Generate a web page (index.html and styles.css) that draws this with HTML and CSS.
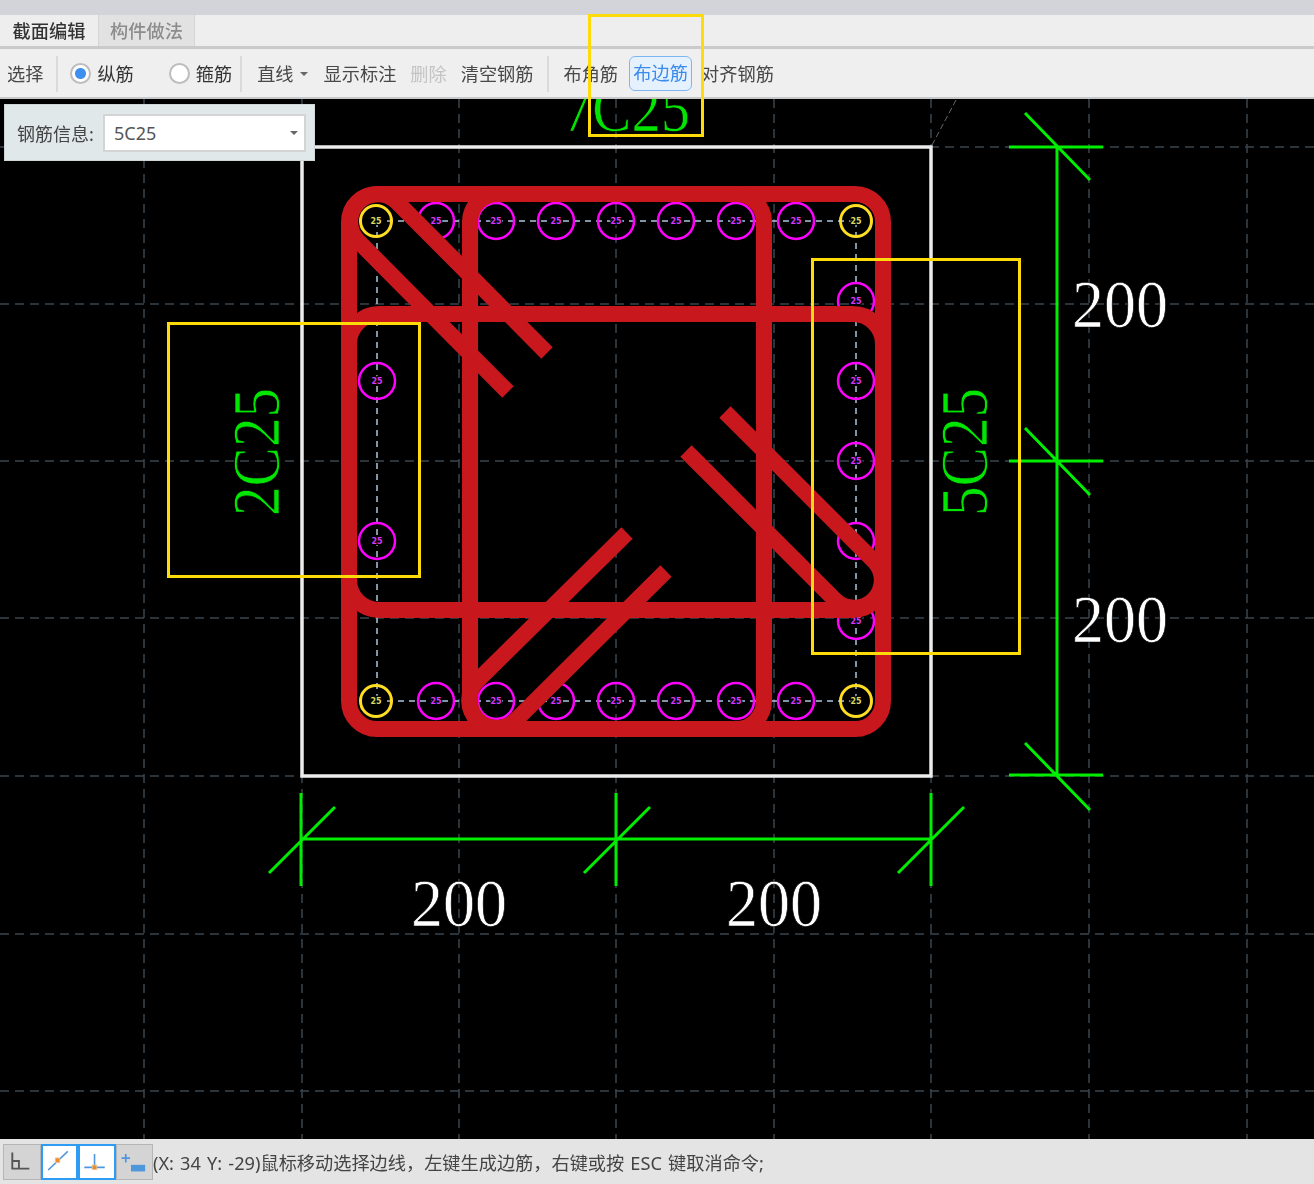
FILE: index.html
```html
<!DOCTYPE html>
<html lang="zh">
<head>
<meta charset="utf-8">
<title>截面编辑</title>
<link rel="stylesheet" href="styles.css">
</head>
<body>
<div class="app">
  <div class="titlebar"></div>
  <div class="tabs">
    <div class="tab tab-active">截面编辑</div>
    <div class="tab tab-idle">构件做法</div>
  </div>
  <div class="toolbar">
    <span class="tool t-select">选择</span>
    <i class="sep s1"></i>
    <span class="radio radio-on r1"></span><span class="tool t-zong">纵筋</span>
    <span class="radio r2"></span><span class="tool t-gu">箍筋</span>
    <i class="sep s2"></i>
    <span class="tool t-line">直线</span><span class="caret"></span>
    <span class="tool t-show">显示标注</span>
    <span class="tool tool-off t-del">删除</span>
    <span class="tool t-clear">清空钢筋</span>
    <i class="sep s3"></i>
    <span class="tool t-corner">布角筋</span>
    <span class="tool tool-on">布边筋</span>
    <span class="tool t-align">对齐钢筋</span>
  </div>
  <div class="canvas">
    <svg class="drawing" viewBox="0 99 1314 1040" xmlns="http://www.w3.org/2000/svg">
      <g class="grid">
        <path d="M144 99V1139M302 99V1139M459 99V1139M616 99V1139M774 99V1139M931 99V1139M1089 99V1139M1247 99V1139"/>
        <path d="M0 147H1314M0 304H1314M0 461H1314M0 618H1314M0 776H1314M0 934H1314M0 1091H1314"/>
      </g>
      <path class="leader" d="M932 145L956 100"/>
      <rect class="concrete" x="302" y="147" width="629" height="629"/>
      <path class="guide" d="M376 221H856M376 701H856M377 221V701M856 221V701"/>
      <g class="bar-main">
        <circle cx="436" cy="221" r="18"/><circle cx="496" cy="221" r="18"/><circle cx="556" cy="221" r="18"/><circle cx="616" cy="221" r="18"/><circle cx="676" cy="221" r="18"/><circle cx="736" cy="221" r="18"/><circle cx="796" cy="221" r="18"/>
        <circle cx="436" cy="701" r="18"/><circle cx="496" cy="701" r="18"/><circle cx="556" cy="701" r="18"/><circle cx="616" cy="701" r="18"/><circle cx="676" cy="701" r="18"/><circle cx="736" cy="701" r="18"/><circle cx="796" cy="701" r="18"/>
        <circle cx="377" cy="381" r="18"/><circle cx="377" cy="541" r="18"/>
        <circle cx="856" cy="301" r="18"/><circle cx="856" cy="381" r="18"/><circle cx="856" cy="461" r="18"/><circle cx="856" cy="541" r="18"/><circle cx="856" cy="621" r="18"/>
      </g>
      <g class="bar-corner">
        <circle cx="376" cy="221" r="15.500"/><circle cx="856" cy="221" r="15.500"/><circle cx="376" cy="701" r="15.500"/><circle cx="856" cy="701" r="15.500"/>
      </g>
      <g class="bar-label">
        <text x="436" y="224">25</text><text x="496" y="224">25</text><text x="556" y="224">25</text><text x="616" y="224">25</text><text x="676" y="224">25</text><text x="736" y="224">25</text><text x="796" y="224">25</text>
        <text x="436" y="704">25</text><text x="496" y="704">25</text><text x="556" y="704">25</text><text x="616" y="704">25</text><text x="676" y="704">25</text><text x="736" y="704">25</text><text x="796" y="704">25</text>
        <text x="377" y="384">25</text><text x="377" y="544">25</text>
        <text x="856" y="304">25</text><text x="856" y="384">25</text><text x="856" y="464">25</text><text x="856" y="544">25</text><text x="856" y="624">25</text>
      </g>
      <g class="bar-label-corner">
        <text x="376" y="224">25</text><text x="856" y="224">25</text><text x="376" y="704">25</text><text x="856" y="704">25</text>
      </g>
      <g class="stirrup">
        <rect x="349" y="194" width="534" height="535" rx="28"/>
        <rect x="349" y="314" width="534" height="296" rx="30"/>
        <rect x="470" y="194" width="294" height="535" rx="28"/>
        <path d="M547 353L396.500 201.500A27.600 27.600 0 0 0 357.500 240.500L508 392"/>
        <path d="M627 533L476.500 681.500A27.600 27.600 0 0 0 515.500 720.500L666 571"/>
        <path d="M725 412L874.500 561.500A27.600 27.600 0 0 1 835.500 600.500L686 451"/>
      </g>
      <path class="dim" d="M1057 147V775M1009 147H1103M1009 461H1103M1009 775H1103M1025 113L1090 180M1025 428L1090 495M1025 743L1090 810"/>
      <path class="dim" d="M301 839H931M301 793V886M616 793V886M931 793V886M269 873L335 807M584 873L650 807M898 873L964 807"/>
      <text class="dim-text" x="1072" y="327" textLength="96" lengthAdjust="spacingAndGlyphs">200</text>
      <text class="dim-text" x="1072" y="642" textLength="96" lengthAdjust="spacingAndGlyphs">200</text>
      <text class="dim-text" x="411" y="926" textLength="96" lengthAdjust="spacingAndGlyphs">200</text>
      <text class="dim-text" x="726" y="926" textLength="96" lengthAdjust="spacingAndGlyphs">200</text>
      <text class="bar-text" x="563" y="131" textLength="127" lengthAdjust="spacingAndGlyphs">7C25</text>
      <text class="bar-text" transform="translate(279 516) rotate(-90)" textLength="128" lengthAdjust="spacingAndGlyphs">2C25</text>
      <text class="bar-text" transform="translate(987 516) rotate(-90)" textLength="128" lengthAdjust="spacingAndGlyphs">5C25</text>
    </svg>
    <div class="panel">
      <label class="panel-label">钢筋信息:</label>
      <div class="combo"><span>5C25</span><span class="caret caret-combo"></span></div>
    </div>
  </div>
  <div class="statusbar">
    <div class="snaps">
      <div class="snap">
        <svg viewBox="0 0 36 36"><path class="ico-dark" d="M8 8V25H26M8 17H15V25"/></svg>
      </div>
      <div class="snap snap-on">
        <svg viewBox="0 0 36 36"><path class="ico-blue" d="M5 27L27 6"/><rect class="ico-orange" x="13" y="13.500" width="5" height="5"/></svg>
      </div>
      <div class="snap snap-on">
        <svg viewBox="0 0 36 36"><path class="ico-blue" d="M4 24H27M15.500 9V24"/><rect class="ico-orange" x="13" y="21.500" width="5" height="5"/></svg>
      </div>
      <div class="snap">
        <svg viewBox="0 0 36 36"><path class="ico-blue" d="M4 14H13M8.500 9.500V18.500"/><rect class="ico-fill" x="14" y="21" width="15" height="7"/></svg>
      </div>
    </div>
    <span class="status-text">(X: 34 Y: -29)鼠标移动选择边线，左键生成边筋，右键或按 ESC 键取消命令;</span>
  </div>
</div>
<div class="mark mark-a"></div>
<div class="mark mark-b"></div>
<div class="mark mark-c"></div>
</body>
</html>
```
FILE: styles.css
```css
* { box-sizing: border-box; }
html, body { margin: 0; padding: 0; }
body {
  width: 1314px;
  height: 1184px;
  overflow: hidden;
  font-family: "Noto Sans", "Noto Sans CJK SC", sans-serif;
  color: #444;
  position: relative;
}
.app { display: flex; flex-direction: column; height: 100%; }
.titlebar { height: 15px; background: #d3d4d9; flex: none; }
.tabs {
  height: 34px;
  flex: none;
  display: flex;
  background: #eeeeee;
  border-bottom: 3px solid #c9cacc;
}
.tab {
  width: 98px;
  font-size: 18.200px;
  line-height: 33px;
  text-align: center;
  font-weight: 500;
  filter: blur(0.3px);
}
.tab-active { color: #333; background: #eeeeee; }
.tab-idle { color: #8c8c8c; background: #e2e2e2; border-left: 1px solid #d5d5d5; border-right: 1px solid #d5d5d5; width: 97px; }
.toolbar {
  height: 50px;
  flex: none;
  display: flex;
  align-items: center;
  background: #efefef;
  border-bottom: 2px solid #c8c8c8;
  padding-top: 1px;
}
.tool { font-size: 18.200px; line-height: 26px; color: #484848; white-space: nowrap; filter: blur(0.3px); }
.t-select { margin-left: 7px; }
.s1 { margin-left: 13px; }
.r1 { margin-left: 12px; }
.t-zong { margin-left: 6px; color: #333; }
.r2 { margin-left: 35px; }
.t-gu { margin-left: 6px; color: #333; }
.s2 { margin-left: 8px; }
.t-line { margin-left: 15px; }
.caret {
  width: 0;
  height: 0;
  border-left: 4px solid transparent;
  border-right: 4px solid transparent;
  border-top: 4px solid #666;
  margin-left: 6px;
}
.t-show { margin-left: 16px; }
.t-del { margin-left: 14px; }
.tool-off { color: #c4c4c4; }
.t-clear { margin-left: 14px; }
.s3 { margin-left: 14px; }
.t-corner { margin-left: 14px; }
.tool-on {
  margin-left: 11px;
  width: 63px;
  height: 35px;
  line-height: 33px;
  text-align: center;
  color: #3a8bea;
  background: #e6f1fe;
  border: 1px solid #7fb6f2;
  border-radius: 6px;
}
.t-align { margin-left: 9px; }
.sep { width: 2px; height: 36px; background: #dadada; flex: none; }
.radio {
  width: 21px;
  height: 21px;
  flex: none;
  border-radius: 50%;
  border: 2px solid #bdbdbd;
  background: #fff;
}
.radio-on { background: radial-gradient(circle, #3f8ff0 0 5px, #fff 6px); }
.canvas { flex: 1; position: relative; background: #000; overflow: hidden; min-height: 0; }
.drawing { display: block; width: 1314px; height: 1040px; }
.grid path { fill: none; stroke: #3a444f; stroke-width: 1.500; stroke-dasharray: 9 6; }
.leader { fill: none; stroke: #666; stroke-width: 1; stroke-dasharray: 6 3; }
.concrete { fill: none; stroke: #ececec; stroke-width: 3.500; }
.guide { fill: none; stroke: #a8c8dc; stroke-width: 1.500; stroke-dasharray: 6 5; }
.bar-main circle { fill: none; stroke: #ff00ff; stroke-width: 2.500; }
.bar-corner circle { fill: none; stroke: #ffdd22; stroke-width: 3; }
.bar-label text, .bar-label-corner text {
  font-family: "DejaVu Sans", sans-serif;
  font-size: 8px;
  font-weight: 700;
  text-anchor: middle;
  stroke: #000;
  stroke-width: 2.500px;
  paint-order: stroke;
}
.bar-label text { fill: #d838f4; }
.bar-label-corner text { fill: #d8d860; }
.stirrup rect, .stirrup path { fill: none; stroke: #c8181e; stroke-width: 16; }
.dim { fill: none; stroke: #00ee00; stroke-width: 3; }
.dim-text { font-family: "Liberation Serif", serif; font-size: 67px; fill: #fff; stroke: #000; stroke-width: 0.700; }
.bar-text { font-family: "Liberation Serif", serif; font-size: 67px; fill: #00e600; stroke: #000; stroke-width: 0.700; }
.panel {
  position: absolute;
  left: 4px;
  top: 5px;
  width: 311px;
  height: 57px;
  background: #e1e8ea;
  border: 1px solid #d0d6d8;
  display: flex;
  align-items: center;
  padding-left: 12px;
}
.panel-label { font-size: 18px; color: #444; width: 86px; flex: none; white-space: nowrap; filter: blur(0.3px); }
.combo {
  width: 203px;
  height: 38px;
  background: #fff;
  border: 2px solid #d4d4d4;
  display: flex;
  align-items: center;
  justify-content: space-between;
  padding: 0 6px 0 9px;
  font-family: "Noto Sans", sans-serif;
  font-size: 18px;
  color: #555;
}
.caret-combo { margin-left: 0; }
.statusbar {
  height: 45px;
  flex: none;
  display: flex;
  align-items: center;
  background: #e4e4e4;
  padding: 0 0 0 3px;
}
.snaps { display: flex; flex: none; }
.snap {
  width: 37.500px;
  height: 36px;
  background: #d4d4d4;
  border: 1px solid #b5b5b5;
}
.snap svg { display: block; width: 100%; height: 100%; }
.snap-on { background: #fff; border: 2px solid #2e9bf5; }
.ico-dark { fill: none; stroke: #555; stroke-width: 2; }
.ico-blue { fill: none; stroke: #4f97dd; stroke-width: 1.800; }
.ico-orange { fill: #f08a24; stroke: #e8c090; stroke-width: 1; }
.ico-fill { fill: #4f97dd; }
.status-text { font-size: 18.200px; word-spacing: 1.400px; color: #444; white-space: nowrap; filter: blur(0.3px); }
.mark { position: absolute; border: 3px solid #ffdb0a; }
.mark-a { left: 588px; top: 14px; width: 116px; height: 123px; }
.mark-b { left: 811px; top: 258px; width: 210px; height: 397px; }
.mark-c { left: 167px; top: 322px; width: 254px; height: 256px; }
```
